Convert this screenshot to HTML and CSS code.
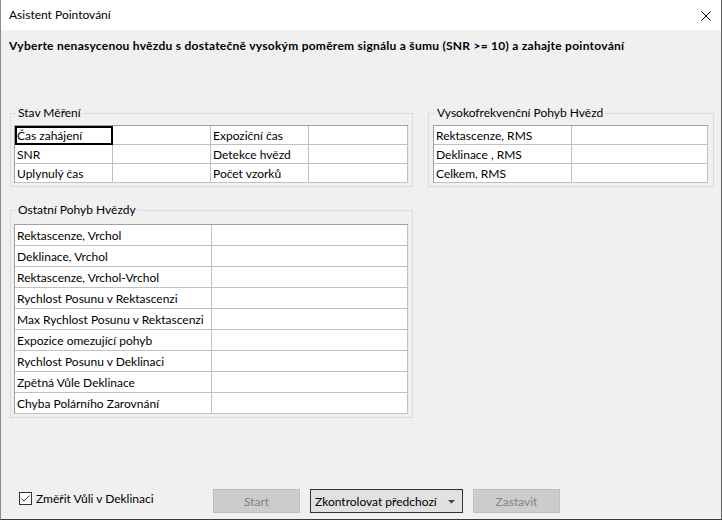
FILE: index.html
```html
<!DOCTYPE html>
<html lang="cs">
<head>
<meta charset="utf-8">
<title>Asistent Pointování</title>
<link rel="stylesheet" href="styles.css">
</head>
<body>
<div class="window">
  <div class="titlebar">
    <span class="title">Asistent Pointování</span>
    <span class="close"><svg width="10" height="10" viewBox="0 0 10 10"><path d="M0.5 0.5 L9.5 9.5 M9.5 0.5 L0.5 9.5" stroke="#000" stroke-width="1" fill="none"/></svg></span>
  </div>
  <div class="content">
    <p class="heading">Vyberte nenasycenou hvězdu s dostatečně vysokým poměrem signálu a šumu (SNR &gt;= 10) a zahajte pointování</p>
    <div class="groups-top">
      <fieldset class="group g-status">
        <legend>Stav Měření</legend>
        <div class="grid t-status">
          <div class="cell focus">Čas zahájení</div><div class="cell"></div><div class="cell">Expoziční čas</div><div class="cell"></div>
          <div class="cell">SNR</div><div class="cell"></div><div class="cell">Detekce hvězd</div><div class="cell"></div>
          <div class="cell">Uplynulý čas</div><div class="cell"></div><div class="cell">Počet vzorků</div><div class="cell"></div>
        </div>
      </fieldset>
      <fieldset class="group g-hf">
        <legend>Vysokofrekvenční Pohyb Hvězd</legend>
        <div class="grid t-hf">
          <div class="cell">Rektascenze, RMS</div><div class="cell"></div>
          <div class="cell">Deklinace , RMS</div><div class="cell"></div>
          <div class="cell">Celkem, RMS</div><div class="cell"></div>
        </div>
      </fieldset>
    </div>
    <fieldset class="group g-other">
      <legend>Ostatní Pohyb Hvězdy</legend>
      <div class="grid t-other">
        <div class="cell">Rektascenze, Vrchol</div><div class="cell"></div>
        <div class="cell">Deklinace, Vrchol</div><div class="cell"></div>
        <div class="cell">Rektascenze, Vrchol-Vrchol</div><div class="cell"></div>
        <div class="cell">Rychlost Posunu v Rektascenzi</div><div class="cell"></div>
        <div class="cell">Max Rychlost Posunu v Rektascenzi</div><div class="cell"></div>
        <div class="cell">Expozice omezující pohyb</div><div class="cell"></div>
        <div class="cell">Rychlost Posunu v Deklinaci</div><div class="cell"></div>
        <div class="cell">Zpětná Vůle Deklinace</div><div class="cell"></div>
        <div class="cell">Chyba Polárního Zarovnání</div><div class="cell"></div>
      </div>
    </fieldset>
    <div class="bottombar">
      <label class="check">
        <span class="box"><svg width="11" height="11" viewBox="0 0 11 11"><path d="M1.5 5.5 L4 8 L9.5 2.5" stroke="#333" stroke-width="1" fill="none"/></svg></span>
        <span class="check-label">Změřit Vůli v Deklinaci</span>
      </label>
      <button class="btn btn-disabled btn-start" type="button">Start</button>
      <button class="btn btn-drop" type="button"><span>Zkontrolovat předchozí</span><svg class="arrow" width="7" height="4" viewBox="0 0 7 4"><path d="M0 0 L7 0 L3.5 3.5 Z" fill="#404040"/></svg></button>
      <button class="btn btn-disabled btn-stop" type="button">Zastavit</button>
    </div>
  </div>
</div>
</body>
</html>
```
FILE: styles.css
```css
* { box-sizing: border-box; }
html, body { margin: 0; padding: 0; }
body {
  background: #f0f0f0;
  font-family: Lato, "Noto Sans", sans-serif;
  font-size: 12px;
  color: #000;
}
.window {
  width: 722px;
  height: 520px;
  display: flex;
  flex-direction: column;
  background: #f0f0f0;
  border-left: 1px solid #8c8c8c;
  border-right: 1px solid #5f5f5f;
  border-bottom: 1px solid #3a3a3a;
}
.titlebar {
  flex: 0 0 30px;
  height: 30px;
  background: #fff;
  display: flex;
  align-items: center;
  justify-content: space-between;
  padding: 0 10px 0 8px;
}
.title { line-height: 30px; }
.close { display: block; width: 10px; height: 10px; margin-top: 1px; }
.close svg { display: block; }
.content {
  flex: 1;
  display: flex;
  flex-direction: column;
  padding-bottom: 6px;
}
.heading {
  margin: 8px 0 0 8px;
  font-weight: 700;
  line-height: 16px;
  letter-spacing: 0.26px;
  white-space: nowrap;
}
.groups-top {
  display: flex;
  gap: 15px;
  margin-top: 51px;
  padding-left: 9px;
}
.group {
  margin: 0;
  border: 1px solid #dcdcdc;
  min-width: 0;
}
.group legend {
  padding: 0 2px;
  margin-left: 2px;
  line-height: 16px;
}
.g-status { width: 403px; padding: 4px 4px 3px 3px; }
.g-hf { width: 286px; padding: 4px 5px 3px 4px; }
.g-other { width: 403px; margin: 15px 0 0 9px; padding: 6px 4px 3px 3px; }
.grid {
  display: grid;
  background: #fff;
  border-top: 1px solid #a0a0a0;
  border-left: 1px solid #a0a0a0;
}
.t-status { width: 394px; grid-template-columns: 98px 98px 98px 99px; grid-auto-rows: 19px; }
.t-hf { width: 275px; grid-template-columns: 138px 136px; grid-auto-rows: 19px; }
.t-other { width: 394px; grid-template-columns: 197px 196px; grid-auto-rows: 21px; }
.cell {
  border-right: 1px solid #c0c0c0;
  border-bottom: 1px solid #c0c0c0;
  padding: 0 2px;
  white-space: nowrap;
  overflow: hidden;
  display: flex;
  align-items: center;
}
.focus {
  outline: 2px solid #000;
  outline-offset: -2px;
}
.bottombar {
  margin-top: auto;
  display: flex;
  align-items: flex-start;
  padding-left: 18px;
}
.check {
  flex: 0 0 194px;
  display: flex;
  align-items: center;
  gap: 4px;
  margin-top: 3px;
  line-height: 13px;
}
.box {
  width: 13px;
  height: 13px;
  border: 1px solid #333;
  background: #fff;
  display: block;
}
.box svg { display: block; }
.btn {
  height: 24px;
  font-family: inherit;
  font-size: 12px;
  padding: 0;
  margin: 0;
  border: 1px solid;
}
.btn-disabled {
  background: #cccccc;
  border-color: #bfbfbf;
  color: #838383;
}
.btn-start { width: 87px; }
.btn-stop { width: 87px; margin-left: 10px; }
.btn-drop {
  width: 153px;
  margin-left: 10px;
  background: #e1e1e1;
  border-color: #333;
  color: #000;
  display: flex;
  align-items: center;
  justify-content: space-between;
  padding: 0 7px 0 4px;
}
.arrow { display: block; margin-top: 2px; }
```
